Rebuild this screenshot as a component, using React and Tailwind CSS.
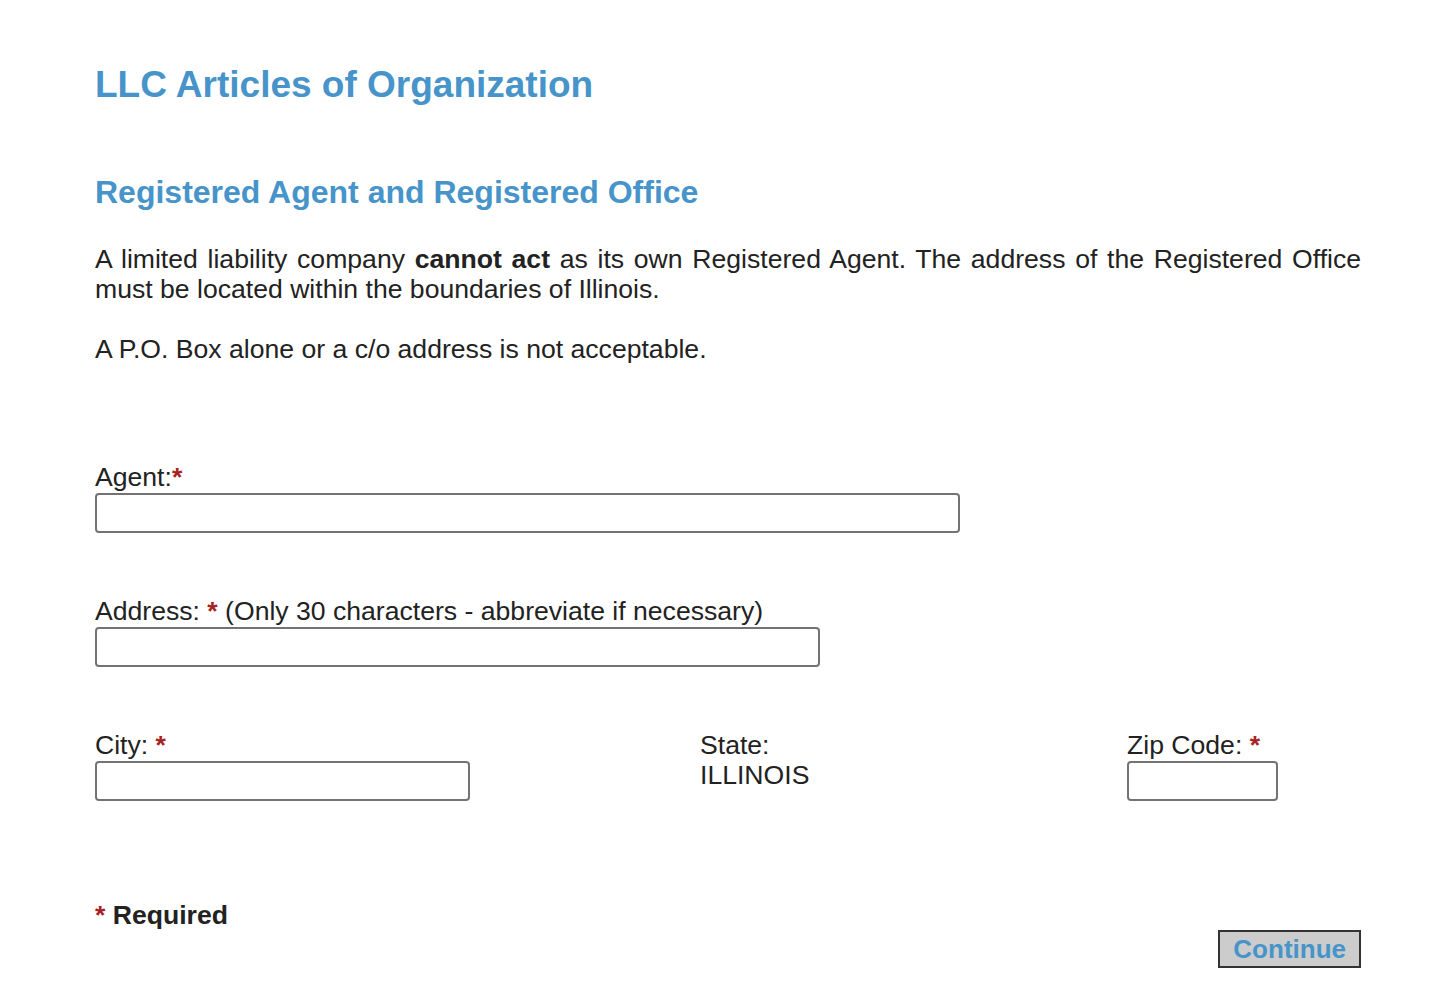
const Req = () => <span className="font-bold text-[#a8231f]">*</span>;

const Field = ({ className }) => (
  <input
    type="text"
    className={`block h-[40px] border-2 border-[#737373] rounded-[4px] bg-white px-2 text-[24px] outline-none ${className}`}
  />
);

const App = () => {
  return (
    <div className="bg-white font-['Liberation_Sans',Arial,sans-serif] text-[#222]">
      <div className="w-[1456px] px-[95px] pb-[20px]">
        <h1 className="mt-[63px] text-[37px] leading-[44px] font-bold text-[#4694c9]">
          LLC Articles of Organization
        </h1>
        <h2 className="mt-[67px] text-[32px] leading-[36px] font-bold text-[#4694c9]">
          Registered Agent and Registered Office
        </h2>

        <p className="mt-[34px] text-[26.6px] leading-[30px] text-justify">
          A limited liability company <b>cannot act</b> as its own Registered Agent. The address of
          the Registered Office must be located within the boundaries of Illinois.
        </p>
        <p className="mt-[30px] text-[26.6px] leading-[30px]">
          A P.O. Box alone or a c/o address is not acceptable.
        </p>

        <div className="mt-[98px]">
          <label className="block text-[26.6px] leading-[30px]">
            Agent:<Req />
          </label>
          <Field className="mt-px w-[865px]" />
        </div>

        <div className="mt-[63px]">
          <label className="block text-[26.6px] leading-[30px]">
            Address: <Req /> (Only 30 characters - abbreviate if necessary)
          </label>
          <Field className="mt-px w-[725px]" />
        </div>

        <div className="mt-[63px] flex text-[26.6px] leading-[30px]">
          <div className="w-[605px]">
            <label className="block">
              City: <Req />
            </label>
            <Field className="mt-px w-[375px]" />
          </div>
          <div className="w-[426px]">
            <div>State:</div>
            <div>ILLINOIS</div>
          </div>
          <div className="flex-1 pl-px">
            <label className="block">
              Zip Code: <Req />
            </label>
            <Field className="mt-px w-[151px]" />
          </div>
        </div>

        <div className="mt-[99px] text-[26.6px] leading-[30px] font-bold">
          <span className="text-[#a8231f]">*</span> Required
        </div>

        <div className="flex justify-end">
          <button
            type="button"
            className="h-[38px] border-2 border-[#333] bg-[#cccccc] px-[13px] text-[26px] leading-[34px] font-bold text-[#4694c9]"
          >
            Continue
          </button>
        </div>
      </div>
    </div>
  );
};

export default App;
